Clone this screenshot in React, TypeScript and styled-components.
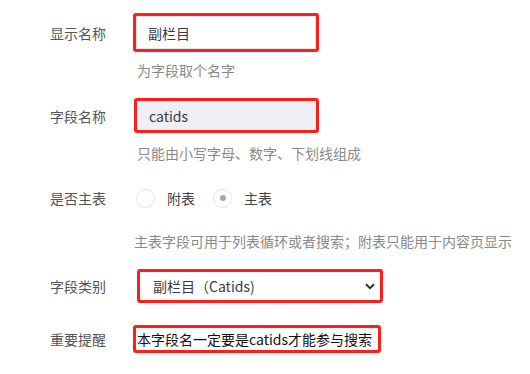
import React from "react";
import styled, { createGlobalStyle } from "styled-components";

const GlobalStyle = createGlobalStyle`
  html, body {
    margin: 0;
    padding: 0;
    background: #ffffff;
  }
  body {
    font-family: "Noto Sans CJK SC", "Noto Sans", sans-serif;
    font-size: 14px;
    color: #555;
  }
`;

const Form = styled.div`
  display: flex;
  flex-direction: column;
  padding: 13px 0 0 50px;
  width: 480px;
`;

const Row = styled.div<{ $gap?: number }>`
  display: flex;
  align-items: center;
  margin-top: ${(p) => p.$gap ?? 0}px;
`;

const Label = styled.div`
  width: 83px;
  flex-shrink: 0;
  font-size: 14px;
  line-height: 20px;
  color: #555;
`;

const Help = styled.div<{ $gap: number; $indent: number }>`
  margin-top: ${(p) => p.$gap}px;
  padding-left: ${(p) => p.$indent}px;
  font-size: 14px;
  line-height: 20px;
  color: #8a8a8a;
  white-space: nowrap;
`;

// red annotation frame drawn round a control
const Highlight = styled.div<{ $w: number; $h: number; $offset?: number; $bg?: string }>`
  box-sizing: border-box;
  width: ${(p) => p.$w}px;
  height: ${(p) => p.$h}px;
  margin-left: ${(p) => p.$offset ?? 0}px;
  border: 3px solid #ff1f1a;
  border-radius: 3px;
  background: ${(p) => p.$bg ?? "#fff"};
  display: flex;
  align-items: center;
`;

const TextInput = styled.input<{ $pad: number }>`
  box-sizing: border-box;
  width: 100%;
  height: 100%;
  border: 1px solid #e4e6ee;
  border-radius: 2px;
  background: transparent;
  padding: 0 0 0 ${(p) => p.$pad}px;
  font-family: "Noto Sans CJK SC", "Noto Sans", sans-serif;
  font-size: 14px;
  color: #3a3a48;
  outline: none;
`;

const PlainInput = styled(TextInput)`
  border: none;
`;

const RadioGroup = styled.div`
  display: flex;
  align-items: center;
  margin-left: 3px;
`;

const RadioOption = styled.label`
  display: flex;
  align-items: center;
  gap: 12px;
  margin-right: 18px;
  font-size: 14px;
  line-height: 20px;
  color: #444;
`;

const RadioCircle = styled.span<{ $checked?: boolean }>`
  box-sizing: border-box;
  width: 19px;
  height: 19px;
  border: 1px solid #e6e6e6;
  border-radius: 50%;
  background: #fff;
  display: flex;
  align-items: center;
  justify-content: center;

  &::after {
    content: "";
    width: 6px;
    height: 6px;
    border-radius: 50%;
    background: ${(p) => (p.$checked ? "#a8a8a8" : "transparent")};
  }
`;

const SelectBox = styled.div`
  flex: 1;
  display: flex;
  align-items: center;
  justify-content: space-between;
  padding: 0 5px 0 13px;
  font-size: 14px;
  color: #3a3a48;
`;

const Notice = styled.div`
  padding-left: 1px;
  font-size: 14px;
  color: #111;
  white-space: nowrap;
`;

const Chevron = () => (
  <svg width="10" height="7" viewBox="0 0 10 7">
    <path d="M1 1.2 L5 5.2 L9 1.2" fill="none" stroke="#333" strokeWidth="2" />
  </svg>
);

export default function App() {
  return (
    <>
      <GlobalStyle />
      <Form>
        <Row>
          <Label>显示名称</Label>
          <Highlight $w={186} $h={39}>
            <TextInput $pad={11} value="副栏目" readOnly />
          </Highlight>
        </Row>
        <Help $gap={8} $indent={87}>为字段取个名字</Help>

        <Row $gap={18}>
          <Label>字段名称</Label>
          <Highlight $w={185} $h={35} $offset={1} $bg="#eef0f5">
            <PlainInput $pad={12} value="catids" readOnly />
          </Highlight>
        </Row>
        <Help $gap={10} $indent={87}>只能由小写字母、数字、下划线组成</Help>

        <Row $gap={25}>
          <Label>是否主表</Label>
          <RadioGroup>
            <RadioOption>
              <RadioCircle />
              附表
            </RadioOption>
            <RadioOption>
              <RadioCircle $checked />
              主表
            </RadioOption>
          </RadioGroup>
        </Row>
        <Help $gap={23} $indent={84}>
          主表字段可用于列表循环或者搜索；附表只能用于内容页显示
        </Help>

        <Row $gap={18}>
          <Label>字段类别</Label>
          <Highlight $w={246} $h={34} $offset={4}>
            <SelectBox>
              <span>副栏目（Catids)</span>
              <Chevron />
            </SelectBox>
          </Highlight>
        </Row>

        <Row $gap={22}>
          <Label>重要提醒</Label>
          <Highlight $w={248} $h={28}>
            <Notice>本字段名一定要是catids才能参与搜索</Notice>
          </Highlight>
        </Row>
      </Form>
    </>
  );
}
